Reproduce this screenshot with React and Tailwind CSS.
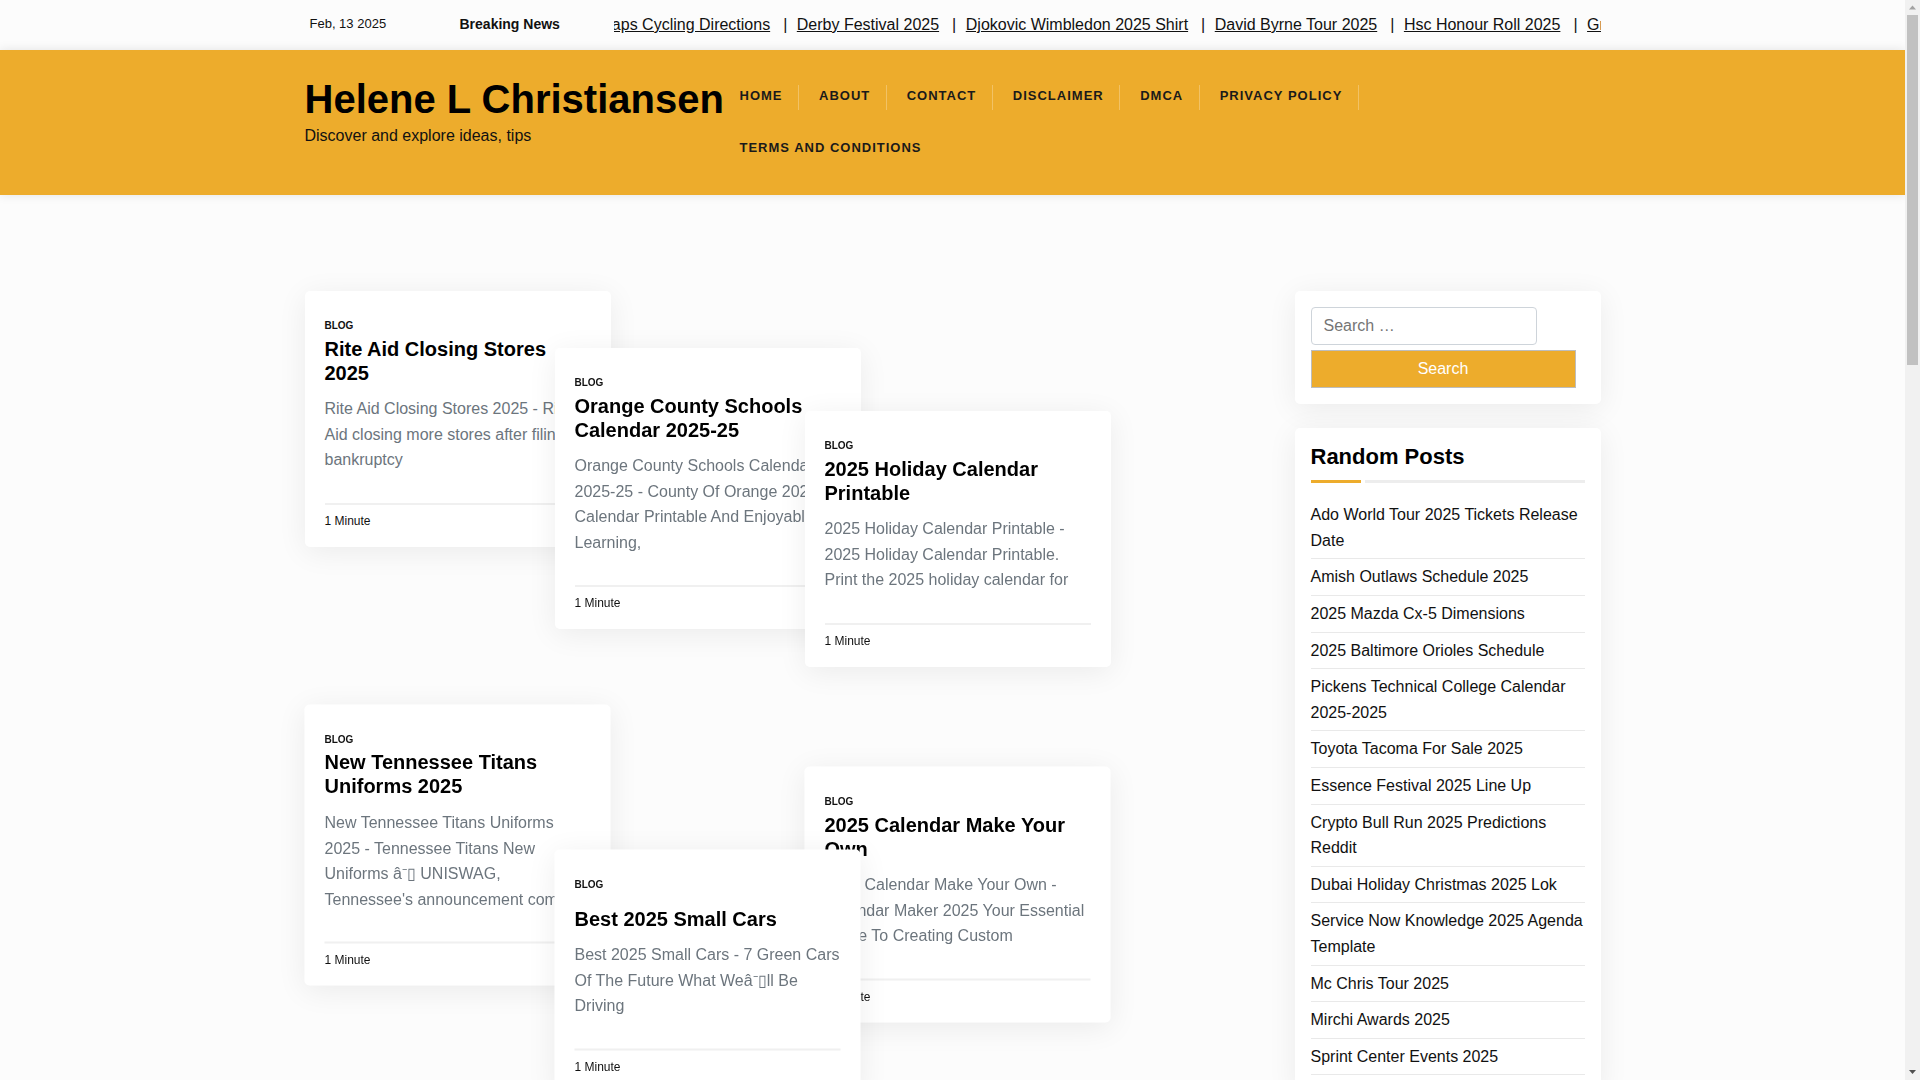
import React from "react";

const tickerItems = [
  "Google Maps Cycling Directions",
  "Derby Festival 2025",
  "Djokovic Wimbledon 2025 Shirt",
  "David Byrne Tour 2025",
  "Hsc Honour Roll 2025",
  "Green Bay Packers 2025",
];

const navItems = ["Home", "About", "Contact", "Disclaimer", "DMCA", "Privacy Policy", "Terms and Conditions"];

const randomPosts = [
  "Ado World Tour 2025 Tickets Release Date",
  "Amish Outlaws Schedule 2025",
  "2025 Mazda Cx-5 Dimensions",
  "2025 Baltimore Orioles Schedule",
  "Pickens Technical College Calendar 2025-2025",
  "Toyota Tacoma For Sale 2025",
  "Essence Festival 2025 Line Up",
  "Crypto Bull Run 2025 Predictions Reddit",
  "Dubai Holiday Christmas 2025 Lok",
  "Service Now Knowledge 2025 Agenda Template",
  "Mc Chris Tour 2025",
  "Mirchi Awards 2025",
  "Sprint Center Events 2025",
];

const Card = ({ title, text, className = "", titleMt = "mt-[5px]" }) => (
  <article className={`relative w-[306px] rounded-[5px] bg-white px-5 pt-[29px] pb-[18px] shadow-[0_5px_30px_rgba(0,0,0,0.07)] ${className}`}>
    <div className="text-[10px] font-bold uppercase leading-[12px] text-[#111]">Blog</div>
    <h2 className={`${titleMt} text-[20px] font-bold leading-[24px] text-black`}>{title}</h2>
    <p className="mt-[11px] text-[16px] leading-[25.6px] text-[#6c757d]">{text}</p>
    <div className="mt-[30px] border-t-2 border-[#f0f0f0] pt-[8px] text-[12px] leading-[16px] text-[#111]">1 Minute</div>
  </article>
);

const Scrollbar = () => (
  <div className="flex h-screen w-[15px] shrink-0 flex-col items-center bg-[#f1f1f1]">
    <svg width="15" height="15" viewBox="0 0 15 15" className="shrink-0">
      <path d="M7.5 5.5 L11 9.5 L4 9.5 Z" fill="#a3a3a3" />
    </svg>
    <div className="h-[350px] w-[11px] bg-[#c1c1c1]" />
    <div className="flex-1" />
    <svg width="15" height="15" viewBox="0 0 15 15" className="shrink-0">
      <path d="M4 5 L11 5 L7.5 9 Z" fill="#505050" />
    </svg>
  </div>
);

export default function App() {
  return (
    <div className="flex h-screen overflow-hidden bg-[#fcfcfc] font-['Liberation_Sans',Arial,sans-serif] text-[#111]">
      <div className="min-w-0 flex-1 overflow-hidden">
        <div className="mx-auto flex h-[50px] w-[1296px] items-center">
          <div className="w-[155px] pb-[2px] pl-[5px] text-[13px] text-[#111]">Feb, 13 2025</div>
          <div className="w-[154px] pb-[2px] text-[14px] font-bold text-[#111]">Breaking News</div>
          <div className="flex min-w-0 flex-1 overflow-hidden whitespace-nowrap text-[16px] leading-[24px] text-[#111]">
            <div className="-ml-[71px] flex shrink-0">
              {tickerItems.map((item) => (
                <React.Fragment key={item}>
                  <a className="underline">{item}</a>
                  <span className="pr-[9.5px] pl-[13px]">|</span>
                </React.Fragment>
              ))}
            </div>
          </div>
        </div>

        <header className="relative h-[145px] bg-[#edac2c] shadow-[0_0_10px_rgba(0,0,0,0.1)]">
          <div className="mx-auto flex w-[1296px]">
            <div className="w-[415px] shrink-0 pt-[25px]">
              <h1 className="text-[40px] leading-[48px] font-bold whitespace-nowrap text-black">Helene L Christiansen</h1>
              <p className="text-[16px] leading-[25.6px] text-[#111]">Discover and explore ideas, tips</p>
            </div>
            <nav className="flex w-[780px] flex-wrap content-start gap-y-[27px] pt-[35px]">
              {navItems.map((item, i) => (
                <a
                  key={item}
                  className={`block h-[25px] pl-5 pr-[15.5px] text-[13px] leading-[22px] font-bold tracking-[1px] text-[#1a1a1a] uppercase ${i < navItems.length - 1 ? "border-r border-[#f2c265]" : ""}`}
                >
                  {item}
                </a>
              ))}
            </nav>
          </div>
        </header>

        <main className="mx-auto flex w-[1296px] items-start justify-between">
          <div className="flex items-start">
            <div className="flex flex-col">
              <Card className="mt-[96px]" title="Rite Aid Closing Stores 2025" text="Rite Aid Closing Stores 2025 - Rite Aid closing more stores after filing bankruptcy" />
              <Card className="mt-[158px] -translate-x-[0.5px] -translate-y-[0.5px] will-change-transform" titleMt="mt-[4px] mb-[12px]" title="New Tennessee Titans Uniforms 2025" text={"New Tennessee Titans Uniforms 2025 - Tennessee Titans New Uniforms â\u207B\u25AF UNISWAG, Tennessee's announcement comes"} />
            </div>
            <div className="-ml-[56px] flex flex-col">
              <Card className="mt-[153px]" title="Orange County Schools Calendar 2025-25" text="Orange County Schools Calendar 2025-25 - County Of Orange 2025 Calendar Printable And Enjoyable Learning," />
              <Card className="z-10 mt-[221px] -translate-x-[0.5px] -translate-y-[0.5px] will-change-transform" titleMt="mt-[16px]" title="Best 2025 Small Cars" text={"Best 2025 Small Cars - 7 Green Cars Of The Future What Weâ\u207B\u25AFll Be Driving"} />
            </div>
            <div className="-ml-[56px] flex flex-col">
              <Card className="mt-[216px]" title="2025 Holiday Calendar Printable" text="2025 Holiday Calendar Printable - 2025 Holiday Calendar Printable. Print the 2025 holiday calendar for" />
              <Card className="mt-[100px] -translate-x-[0.5px] -translate-y-[0.5px] will-change-transform" title="2025 Calendar Make Your Own" text="2025 Calendar Make Your Own - Calendar Maker 2025 Your Essential Guide To Creating Custom" />
            </div>
          </div>

          <aside className="w-[306px] pt-[96px]">
            <section className="rounded-[5px] bg-white p-4 shadow-[0_5px_30px_rgba(0,0,0,0.07)]">
              <input
                placeholder="Search …"
                className="block h-[38px] w-[226px] rounded-[4px] border border-[#ced4da] bg-white px-3 text-[16px] text-[#212529] placeholder:text-[#757575]"
              />
              <button className="mt-[5px] block h-[38px] w-[265px] border-[1.5px] border-[#bdbdbd] bg-[#edac2c] text-[16px] text-white">Search</button>
            </section>
            <section className="mt-[24px] rounded-t-[5px] bg-white px-4 pt-[15px] pb-4 shadow-[0_5px_30px_rgba(0,0,0,0.07)]">
              <h3 className="text-[22px] leading-[28px] font-bold text-black">Random Posts</h3>
              <div className="mt-[9px] flex h-[3px] w-[274px] gap-[4px]">
                <div className="w-[50px] bg-[#edac2c]" />
                <div className="flex-1 bg-[#ededed]" />
              </div>
              <ul className="mt-[14.2px] w-[274px]">
                {randomPosts.map((post) => (
                  <li key={post} className="border-b border-[#e9e9e9] py-[5px] text-[16px] leading-[25.6px] text-[#111]">{post}</li>
                ))}
              </ul>
            </section>
          </aside>
        </main>
      </div>
      <Scrollbar />
    </div>
  );
}
